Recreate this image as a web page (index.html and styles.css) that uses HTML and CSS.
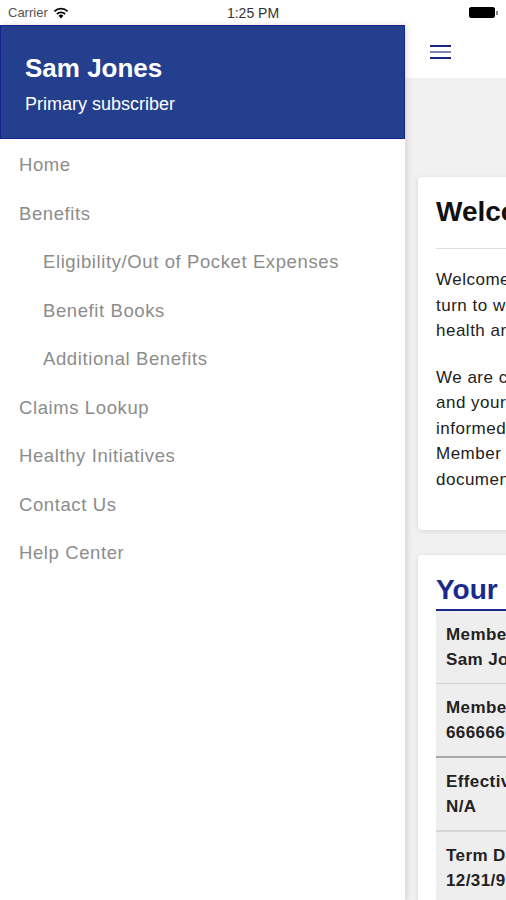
FILE: index.html
```html
<!DOCTYPE html>
<html lang="en">

<head>
    <meta charset="UTF-8">
    <meta name="viewport" content="width=device-width, initial-scale=1.0">
    <title>Member Portal</title>
    <link rel="stylesheet" href="styles.css">
</head>

<body>
    <div class="status-bar">
        <div class="carrier">Carrier
            <svg class="wifi" width="16" height="12" viewBox="0 0 16 12">
                <path d="M8 11.5 L5.6 8.8 A3.4 3.4 0 0 1 10.4 8.8 Z" fill="#000" />
                <path d="M3.9 7 A5.9 5.9 0 0 1 12.1 7" stroke="#000" stroke-width="1.8" fill="none" />
                <path d="M1.4 4.4 A9.3 9.3 0 0 1 14.6 4.4" stroke="#000" stroke-width="1.8" fill="none" />
            </svg>
        </div>
        <div class="clock">1:25 PM</div>
        <div class="battery">
            <span class="battery-body"></span><span class="battery-tip"></span>
        </div>
    </div>

    <div class="app">
        <!-- side menu -->
        <nav class="drawer">
            <div class="drawer-head">
                <div class="user-name">Sam Jones</div>
                <div class="user-role">Primary subscriber</div>
            </div>
            <ul class="menu">
                <li>Home</li>
                <li>Benefits</li>
                <li class="sub">Eligibility/Out of Pocket Expenses</li>
                <li class="sub">Benefit Books</li>
                <li class="sub">Additional Benefits</li>
                <li>Claims Lookup</li>
                <li>Healthy Initiatives</li>
                <li>Contact Us</li>
                <li>Help Center</li>
            </ul>
        </nav>

        <!-- page behind the menu -->
        <div class="main">
            <div class="topbar">
                <span class="burger"><i></i><i class="mid"></i><i></i></span>
            </div>
            <div class="content">
                <div class="card">
                    <h2 class="card-title">Welcome</h2>
                    <p>Welcome to your member portal, the place to<br>turn to when you have questions about your<br>health and wellness benefits.</p>
                    <p>We are committed to keeping you<br>and your family healthy and well<br>informed. Use this portal to view your<br>Member ID card, claims and benefit<br>documents at any time.</p>
                </div>

                <div class="card">
                    <h2 class="card-title blue">Your Coverage</h2>
                    <div class="info-table">
                        <div class="info-row light">
                            <div>Member Name</div>
                            <div>Sam Jones</div>
                        </div>
                        <div class="info-row dark">
                            <div>Member ID</div>
                            <div>666666666</div>
                        </div>
                        <div class="info-row">
                            <div>Effective Date</div>
                            <div>N/A</div>
                        </div>
                        <div class="info-row">
                            <div>Term Date</div>
                            <div>12/31/9999</div>
                        </div>
                    </div>
                </div>
            </div>
        </div>
    </div>
</body>

</html>
```

FILE: styles.css
```css
html,
body {
    margin: 0;
    padding: 0;
}

body {
    width: 506px;
    height: 900px;
    overflow: hidden;
    background-color: #fff;
    font-family: "Liberation Sans", Arial, sans-serif;
}

.status-bar {
    height: 25px;
    display: flex;
    align-items: center;
    justify-content: space-between;
    padding: 0 8px;
    font-size: 13px;
    color: #000;
    position: relative;
}

.carrier {
    display: flex;
    align-items: center;
    gap: 5px;
    color: #555;
}

.clock {
    position: absolute;
    left: 0;
    right: 0;
    text-align: center;
    font-size: 14px;
    color: #333;
}

.battery {
    display: flex;
    align-items: center;
    margin-right: 0;
}

.battery-body {
    width: 24px;
    height: 9px;
    border: 1px solid #000;
    border-radius: 2px;
    background: #000;
}

.battery-tip {
    width: 2px;
    height: 4px;
    background: #888;
    margin-left: 1px;
}

.app {
    display: flex;
    height: 875px;
}

.drawer {
    width: 405px;
    flex-shrink: 0;
    background-color: #fff;
    box-shadow: 2px 0 6px rgba(0, 0, 0, 0.12);
    position: relative;
    z-index: 2;
}

.drawer-head {
    background-color: #253f8f;
    border: 1px solid #15238a;
    height: 114px;
    padding: 25px 0 0 24px;
    box-sizing: border-box;
    color: #fff;
}

.user-name {
    font-size: 26px;
    font-weight: bold;
    line-height: 34px;
}

.user-role {
    font-size: 18px;
    line-height: 24px;
    margin-top: 7px;
}

.menu {
    list-style: none;
    margin: 0;
    padding: 2px 0 0 0;
}

.menu li {
    font-size: 18.5px;
    letter-spacing: 0.6px;
    color: #8c8c8c;
    line-height: 48.5px;
    padding-left: 19px;
}

.menu li.sub {
    padding-left: 43px;
}

.main {
    width: 506px;
    flex-shrink: 0;
    background-color: #f1f1f1;
}

.topbar {
    height: 53px;
    background-color: #fff;
    display: flex;
    align-items: center;
    padding-left: 25px;
}

.burger {
    display: flex;
    flex-direction: column;
    gap: 4px;
    width: 21px;
}

.burger i {
    display: block;
    height: 2px;
    background-color: #1c2580;
}

.burger i.mid {
    background-color: #7f86b8;
}

.content {
    padding: 99px 13px 0 13px;
}

.card {
    background: #fff;
    border-radius: 4px;
    box-shadow: 0 1px 5px rgba(0, 0, 0, 0.12);
    padding: 18px 18px 38px 18px;
    margin-bottom: 25px;
}

.card-title {
    margin: 0;
    font-size: 28px;
    font-weight: bold;
    color: #111;
    line-height: 34px;
    padding-bottom: 19px;
    border-bottom: 1px solid #ddd;
}

.card-title.blue {
    color: #1a2a8c;
    font-size: 28px;
    line-height: 34px;
    padding-bottom: 2px;
    border-bottom: 2px solid #1a2a8c;
}

.card p {
    margin: 18px 0 0 0;
    font-size: 17px;
    letter-spacing: 0.5px;
    line-height: 25.5px;
    color: #222;
    white-space: nowrap;
}

.card p + p {
    margin-top: 21px;
}

.info-row {
    background-color: #eeeeee;
    padding: 11px 10px;
    font-size: 17px;
    letter-spacing: 0.4px;
    font-weight: bold;
    line-height: 25px;
    color: #222;
    border-bottom: 2px solid #d6d6d6;
}

.info-row.light {
    border-bottom: 1px solid #d0d0d0;
}

.info-row.dark {
    border-bottom-color: #a8a8a8;
}
```
